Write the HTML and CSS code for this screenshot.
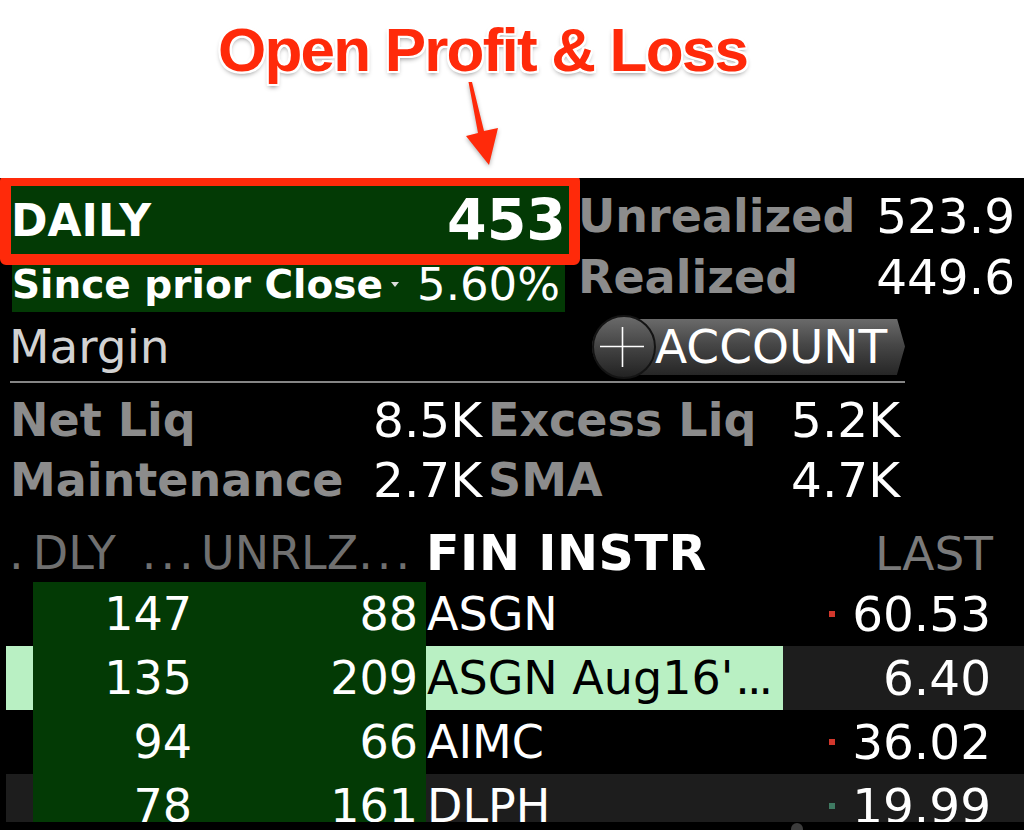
FILE: index.html
```html
<!DOCTYPE html>
<html lang="en">
<head>
<meta charset="utf-8">
<title>Open Profit &amp; Loss</title>
<link rel="stylesheet" href="styles.css">
</head>
<body>
<div class="annot">
  <h1 class="title">Open Profit &amp; Loss</h1>
  <svg class="arrow" width="1024" height="178" viewBox="0 0 1024 178" aria-hidden="true">
    <polygon points="468.5,82 472,82 484,131 498,128 489,165 466,136 478,133" />
  </svg>
</div>
<div class="panel">
  <div class="summary">
    <div class="pnl">
      <div class="daily"><span class="daily-label">DAILY</span><span class="daily-value">453</span></div>
      <div class="since"><span class="since-label">Since prior Close</span><span class="caret"></span><span class="since-value">5.60%</span></div>
    </div>
    <div class="realized">
      <div class="kv"><span class="lbl">Unrealized</span><span class="val">523.9</span></div>
      <div class="kv"><span class="lbl">Realized</span><span class="val">449.6</span></div>
    </div>
  </div>
  <div class="account">
    <div class="margin-row">
      <span class="margin">Margin</span>
      <button class="acct-btn" type="button">
        <span class="acct-icon"><svg width="48" height="44" viewBox="0 0 48 44"><path d="M2 21.5H46M24.5 2V42" /></svg></span>
        <span class="acct-text">ACCOUNT</span>
      </button>
    </div>
    <div class="metrics">
      <div class="metric m-left"><span class="lbl">Net Liq</span><span class="val">8.5K</span></div>
      <div class="metric m-right"><span class="lbl">Excess Liq</span><span class="val">5.2K</span></div>
      <div class="metric m-left"><span class="lbl">Maintenance</span><span class="val">2.7K</span></div>
      <div class="metric m-right"><span class="lbl">SMA</span><span class="val">4.7K</span></div>
    </div>
  </div>
  <div class="table">
    <div class="thead">
      <span class="th th-dly">.&thinsp;DLY<span class="dots dots-dly">...</span></span>
      <span class="th th-unr">UNRLZ<span class="dots">...</span></span>
      <span class="th th-fin">FIN INSTR</span>
      <span class="th th-last">LAST</span>
    </div>
    <div class="tbody">
      <div class="row">
        <span class="c-strip"></span><span class="c-num">147</span><span class="c-num">88</span>
        <span class="c-fin">ASGN</span><span class="c-last"><i class="tick down"></i>60.53</span>
      </div>
      <div class="row sel">
        <span class="c-strip"></span><span class="c-num">135</span><span class="c-num">209</span>
        <span class="c-fin">ASGN Aug16'<span class="trunc">...</span></span><span class="c-last">6.40</span>
      </div>
      <div class="row">
        <span class="c-strip"></span><span class="c-num">94</span><span class="c-num">66</span>
        <span class="c-fin">AIMC</span><span class="c-last"><i class="tick down"></i>36.02</span>
      </div>
      <div class="row alt">
        <span class="c-strip"></span><span class="c-num">78</span><span class="c-num">161</span>
        <span class="c-fin">DLPH</span><span class="c-last"><i class="tick up"></i>19.99</span>
      </div>
    </div>
    <div class="footer"><span class="dot"></span></div>
  </div>
</div>
</body>
</html>
```
FILE: styles.css
```css
html, body {
  margin: 0;
  padding: 0;
}
body {
  width: 1024px;
  height: 830px;
  overflow: hidden;
  background: #fff;
  font-family: "DejaVu Sans", Verdana, sans-serif;
}

/* annotation */
.annot {
  position: relative;
  height: 178px;
}
.title {
  margin: 0;
  padding: 15px 0 0 218px;
  font: bold 62px/70px "Liberation Sans", Arial, sans-serif;
  letter-spacing: -1.8px;
  color: #ff2a0a;
  text-shadow:
    2px 0 0 #fff, -2px 0 0 #fff, 0 2px 0 #fff, 0 -2px 0 #fff,
    2px 2px 0 #fff, -2px 2px 0 #fff, 2px -2px 0 #fff, -2px -2px 0 #fff,
    0 3px 5px rgba(0, 0, 0, 0.45);
}
.arrow {
  position: absolute;
  left: 0;
  top: 0;
}
.arrow polygon {
  fill: #ff2a0a;
  filter: drop-shadow(0 2px 2px rgba(0, 0, 0, 0.3));
}

/* panel */
.panel {
  background: #000;
  height: 652px;
  color: #fff;
  overflow: hidden;
}
.summary {
  display: flex;
}
.pnl {
  width: 580px;
  margin-top: -3px;
  flex: none;
}
.daily {
  box-sizing: border-box;
  height: 90px;
  border: 11px solid #ff2a0a;
  border-radius: 6px;
  background: #033a05;
  display: flex;
  align-items: center;
  justify-content: space-between;
  padding: 0 3px 0 0;
}
.daily-label {
  font-weight: bold;
  font-size: 44px;
}
.daily-value {
  font-weight: bold;
  font-size: 57px;
}
.since {
  box-sizing: border-box;
  height: 47px;
  margin: 0 15px 0 12px;
  padding: 0 5px 8px 0;
  background: #033a05;
  display: flex;
  align-items: center;
}
.since-label {
  font-weight: bold;
  font-size: 39px;
}
.caret {
  width: 0;
  height: 0;
  border-left: 4px solid transparent;
  border-right: 4px solid transparent;
  border-top: 5px solid #ddd;
  margin-left: 8px;
}
.since-value {
  margin-left: auto;
  font-size: 45px;
}
.realized {
  flex: 1;
  padding: 7px 9px 0 0;
  margin-left: -2px;
}
.kv {
  display: flex;
  justify-content: space-between;
  align-items: center;
  height: 61px;
}
.lbl {
  color: #8c8c8c;
  font-weight: bold;
  font-size: 46px;
  white-space: nowrap;
}
.val {
  font-size: 48.5px;
  white-space: nowrap;
}

/* account */
.account {
  margin-left: 10px;
  width: 895px;
}
.margin-row {
  height: 69px;
  display: flex;
  align-items: center;
  border-bottom: 2px solid #858585;
}
.margin {
  color: #d2d2d2;
  font-size: 47px;
  margin-left: -1px;
}
.acct-btn {
  margin-left: auto;
  width: 313px;
  height: 56px;
  border: 0;
  padding: 0;
  color: #fff;
  font: inherit;
  display: flex;
  align-items: center;
  border-radius: 28px 0 0 28px;
  background: linear-gradient(#6a6a6a 0%, #474747 45%, #262626 100%);
  clip-path: polygon(-10px -10px, calc(100% - 8px) -10px, calc(100% - 8px) 0, 100% 50%, calc(100% - 8px) 100%, calc(100% - 8px) calc(100% + 10px), -10px calc(100% + 10px));
}
.acct-icon {
  box-sizing: border-box;
  width: 64px;
  height: 64px;
  margin: -4px 0;
  flex: none;
  border-radius: 50%;
  border: 2px solid #141414;
  background: linear-gradient(#6a6a6a 0%, #444 50%, #222 100%);
  display: flex;
  align-items: center;
  justify-content: center;
}
.acct-icon svg {
  display: block;
  margin-left: -4px;
}
.acct-icon path {
  stroke: #fff;
  stroke-width: 1.6;
  fill: none;
}
.acct-text {
  font-size: 47px;
  margin-left: -1px;
  line-height: 1;
}
.metrics {
  display: grid;
  grid-template-columns: 474px 1fr;
  padding-top: 7px;
}
.metric {
  display: flex;
  justify-content: space-between;
  align-items: center;
  height: 60px;
}
.m-left {
  padding-right: 2px;
}
.m-right {
  padding: 0 5px 0 4px;
}

/* table */
.table {
  margin-top: 14px;
}
.thead {
  display: grid;
  grid-template-columns: 194px 226px 357px 1fr;
  margin-left: 6px;
  height: 58px;
  align-items: center;
  white-space: nowrap;
}
.th {
  font-size: 46px;
  color: #707070;
}
.th-dly {
  padding-left: 3px;
}
.th-unr {
  padding-left: 1px;
}
.dots {
  letter-spacing: 4px;
}
.dots-dly {
  margin-left: 26px;
}
.th-fin {
  color: #fff;
  font-weight: bold;
  font-size: 49px;
  letter-spacing: 0.6px;
}
.th-last {
  color: #7a7a7a;
  font-size: 47px;
  text-align: right;
  padding-right: 31px;
}
.tbody {
  height: 240px;
  overflow: hidden;
}
.row {
  display: grid;
  grid-template-columns: 27px 167px 226px 357px 1fr;
  margin-left: 6px;
  height: 64px;
  font-size: 46px;
  white-space: nowrap;
}
.row > span {
  display: flex;
  align-items: center;
}
.c-num {
  background: #033a05;
  justify-content: flex-end;
  padding-right: 8px;
}
.c-fin {
  padding-left: 1px;
  overflow: hidden;
}
.trunc {
  letter-spacing: -3px;
  margin-left: 2px;
}
.c-last {
  justify-content: flex-end;
  padding-right: 33px;
  font-size: 48.5px;
}
.tick {
  width: 6px;
  height: 6px;
  margin-right: 17px;
}
.tick.down {
  background: #d2372c;
}
.tick.up {
  background: #3f7a62;
}
.row.sel .c-strip,
.row.sel .c-fin {
  background: #b9f0c3;
  color: #000;
}
.row.sel .c-last,
.row.alt .c-strip,
.row.alt .c-fin,
.row.alt .c-last {
  background: #1d1d1d;
}
.footer {
  height: 8px;
  overflow: hidden;
  padding-left: 791px;
}
.dot {
  display: block;
  width: 12px;
  height: 12px;
  margin-top: 1px;
  border-radius: 50%;
  background: #3c3c3c;
}
```
